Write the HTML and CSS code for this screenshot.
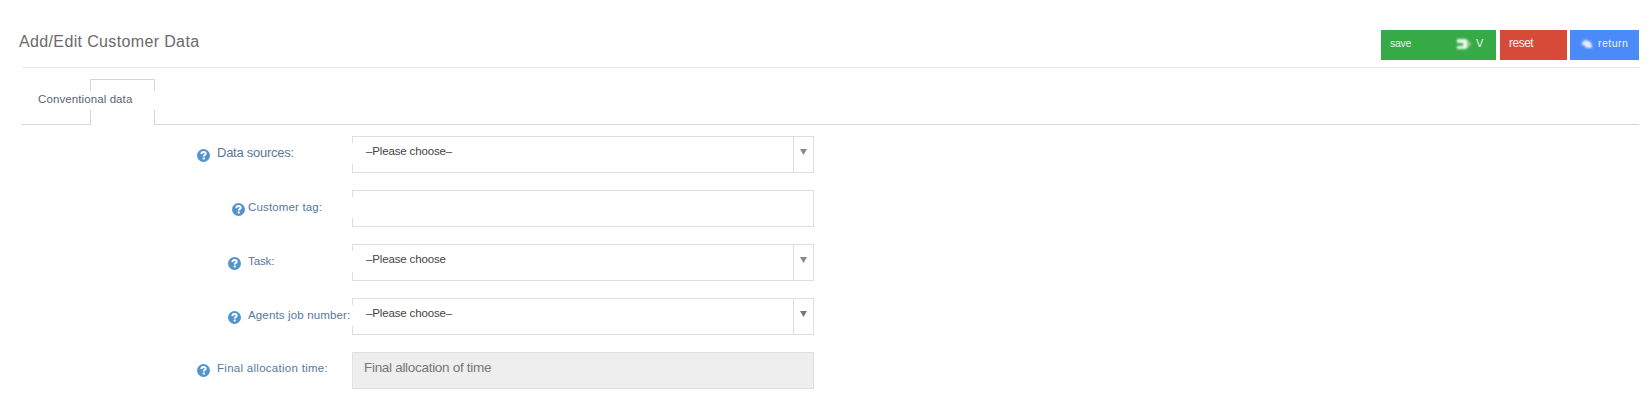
FILE: index.html
```html
<!DOCTYPE html>
<html lang="en">
<head>
<meta charset="utf-8">
<title>Add/Edit Customer Data</title>
<link rel="stylesheet" href="styles.css">
</head>
<body>
<svg class="defs" width="0" height="0"><symbol id="help" viewBox="0 0 13 13"><circle cx="6.5" cy="6.5" r="6.5" fill="#5394cf"/><path d="M4.3 5.1C4.4 3.6 5.2 3 6.6 3c1.300 0 2.100.7 2.100 1.700 0 1.300-1.900 1.400-1.900 2.800" fill="none" stroke="#fff" stroke-width="1.900"/><rect x="5.700" y="8.500" width="2.100" height="1.900" fill="#fff"/></symbol></svg>
<header class="header">
  <h1 class="title">Add/Edit Customer Data</h1>
  <div class="actions">
    <button class="btn save"><span>save</span><svg class="save-icon" width="16" height="12" viewBox="0 0 16 12"><path d="M0 1h9l5 5-5 5H0V8h6V5H0z" fill="#e9fbee"/><path d="M10 3l5 3-5 3z" fill="#9ccb7c"/></svg><span class="v">V</span></button>
    <button class="btn reset"><span>reset</span></button>
    <button class="btn return"><svg class="return-icon" width="12" height="10" viewBox="0 0 12 10"><path d="M0 4.500L5 0v1.500c4 0 6 2 6 7.500H5V8z" fill="#eceaff"/></svg><span>return</span></button>
  </div>
</header>
<nav class="tabs"><div class="tab"><span>Conventional data</span></div></nav>
<main class="form">
  <div class="row"><label class="label wide big"><svg class="help"><use href="#help"/></svg><span>Data sources:</span></label><div class="field select"><span class="value">–Please choose–</span><i class="arrow soft"></i></div></div>
  <div class="row"><label class="label near"><svg class="help"><use href="#help"/></svg><span>Customer tag:</span></label><div class="field"></div></div>
  <div class="row"><label class="label task"><svg class="help"><use href="#help"/></svg><span>Task:</span></label><div class="field select"><span class="value">–Please choose</span><i class="arrow soft"></i></div></div>
  <div class="row"><label class="label agents"><svg class="help"><use href="#help"/></svg><span>Agents job number:</span></label><div class="field select"><span class="value">–Please choose–</span><i class="arrow"></i></div></div>
  <div class="row"><label class="label wide final"><svg class="help"><use href="#help"/></svg><span>Final allocation time:</span></label><div class="field disabled"><span class="value">Final allocation of time</span></div></div>
</main>
</body>
</html>
```
FILE: styles.css
```css
* { box-sizing: border-box; }
body { margin: 0; width: 1650px; height: 419px; overflow: hidden; background: #fff; font: 11.5px/16px "Liberation Sans", Arial, sans-serif; }
.defs { display: block; height: 0; }
.header { display: flex; justify-content: space-between; height: 68px; margin: 0 11px 0 22px; border-bottom: 1px solid #e9e9e9; padding-top: 30px; }
.title { margin: 2px 0 0 -3px; font-size: 16px; line-height: 20px; font-weight: 400; color: #6a6a6a; letter-spacing: .36px; white-space: nowrap; }
.actions { display: flex; }
.btn { display: flex; align-items: flex-start; height: 30px; padding: 5px 0 0 8px; border: 0; color: #e9f5ec; font: 11px/16px "Liberation Sans", Arial, sans-serif; }
.save { width: 115px; background: #35aa47; margin-right: 4px; padding-left: 9px; }
.save span:first-child { width: 67px; text-align: left; font-size: 10.5px; letter-spacing: -.3px; }
.save-icon { margin-top: 3px; filter: blur(1px); }
.v { margin-left: 3px; }
.reset { width: 67px; background: #d84a38; margin-right: 3px; font-size: 12px; letter-spacing: -.5px; padding-left: 9px; }
.return { width: 69px; background: #4a8bf9; padding-left: 11px; font-size: 10.5px; letter-spacing: .5px; }
.return-icon { margin: 4px 5px 0 0; filter: blur(1px); }
.tabs { display: flex; height: 57px; margin: 0 11px 0 22px; padding: 11px 0 0 68px; background: linear-gradient(#d6d6d6, #d6d6d6) 0 100% / 100% 1px no-repeat; }
.tab { width: 65px; height: 46px; background: linear-gradient(#d6d6d6, #d6d6d6) 0 0 / 100% 1px no-repeat, linear-gradient(#d6d6d6 12px, #fff 12px, #fff 31px, #d6d6d6 31px) 0 0 / 1px 100% no-repeat, linear-gradient(#d6d6d6 12px, #fff 12px, #fff 31px, #d6d6d6 31px) 100% 0 / 1px 100% no-repeat, #fff; }
.tab span { display: block; margin: 12px 0 0 -52px; white-space: nowrap; color: #5a6474; letter-spacing: .1px; }
.form { display: flex; flex-direction: column; gap: 17px; padding-top: 11px; }
.row { display: flex; height: 37px; }
.label { display: flex; width: 352px; white-space: nowrap; color: #56799b; letter-spacing: .15px; }
.label span { margin-top: 9px; }
.help { width: 13px; height: 13px; margin: 13px 7px 0 0; flex: none; }
.wide { padding-left: 197px; }
.big { font-size: 13px; letter-spacing: -.25px; }
.near { padding-left: 232px; }
.near .help { margin-right: 3px; }
.task, .agents { padding-left: 228px; }
.task { letter-spacing: -.1px; }
.final { letter-spacing: .28px; }
.final span { margin-top: 8px; }
.final .help { margin-top: 12px; }
.task .help, .agents .help { margin-left: -.5px; margin-right: 7.5px; margin-top: 12.5px; }
.field { width: 462px; height: 37px; border: 1px solid #dedede; border-left: 0; padding: 6px 0 0 14px; background: linear-gradient(#dedede 6px, #fff 6px, #fff 27px, #dedede 27px) 0 0 / 1px 100% no-repeat; color: #444; }
.select { display: flex; justify-content: space-between; padding-top: 0; font-size: 11.5px; letter-spacing: -.15px; }
.select .value { margin-top: 6px; }
.arrow { width: 20px; height: 35px; border-left: 1px solid #dedede; display: flex; justify-content: center; }
.arrow::before { content: ""; width: 7px; height: 6px; margin-top: 12px; background: #777; clip-path: polygon(0 0, 100% 0, 50% 100%); }
.soft::before { background: #888; filter: blur(.5px); }
.disabled { background: #eee; border-left: 1px solid #e2e2e2; padding: 7px 0 0 11px; color: #777; font-size: 13.5px; letter-spacing: -.3px; }
```
